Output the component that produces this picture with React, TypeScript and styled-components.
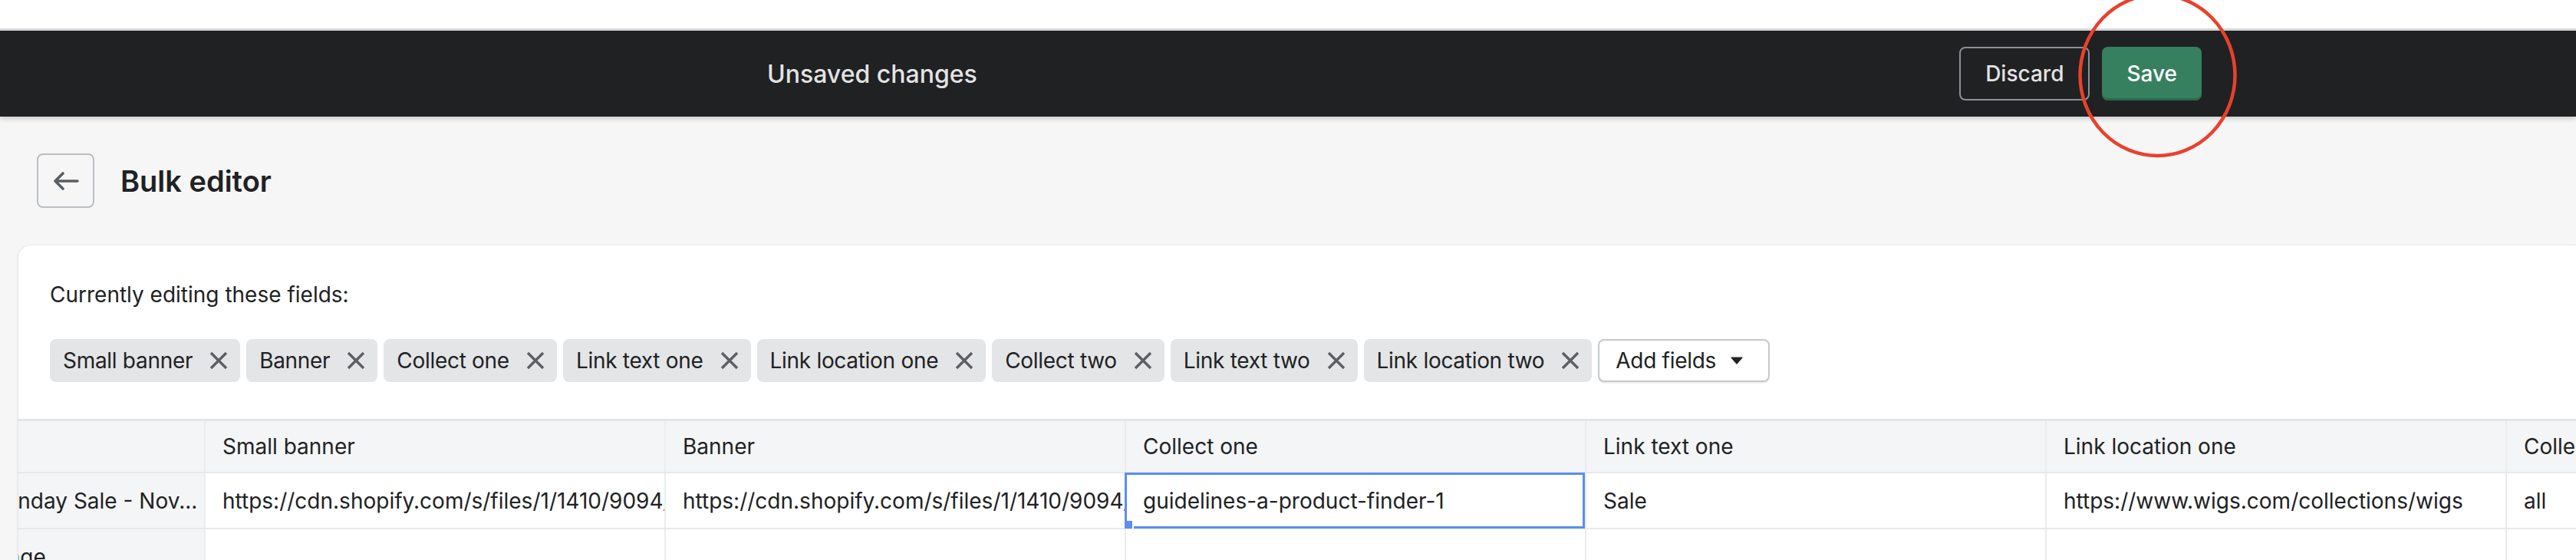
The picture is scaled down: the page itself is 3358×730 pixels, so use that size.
import React from "react";
import styled, { createGlobalStyle } from "styled-components";

const GlobalStyle = createGlobalStyle`
  html, body {
    margin: 0;
    padding: 0;
    overflow: hidden;
  }
  body {
    background: #f6f6f7;
    font-family: Inter, "Noto Sans", "Liberation Sans", sans-serif;
    color: #202223;
  }
  * {
    box-sizing: border-box;
  }
`;

const Page = styled.div`
  position: relative;
  width: 3358px;
  height: 730px;
  overflow: hidden;
`;

const BrowserStrip = styled.div`
  height: 40px;
  background: #ffffff;
  border-bottom: 3px solid #d9dadc;
`;

const SaveBar = styled.header`
  position: relative;
  z-index: 1;
  height: 112px;
  display: flex;
  align-items: center;
  justify-content: space-between;
  padding: 0 488px 0 1000px;
  background: #202123;
  box-shadow: 0 3px 6px rgba(0, 0, 0, 0.18);
`;

const SaveBarTitle = styled.h2`
  margin: 0;
  font-size: 32px;
  font-weight: 500;
  color: #e3e3e3;
`;

const SaveBarActions = styled.div`
  display: flex;
  gap: 16px;
`;

const BarButton = styled.button<{ $primary?: boolean }>`
  height: 70px;
  padding: 0 32px;
  border-radius: 8px;
  font-family: inherit;
  font-size: 28px;
  font-weight: 500;
  cursor: pointer;
  border: ${(p) => (p.$primary ? "none" : "2px solid #8c9196")};
  background: ${(p) => (p.$primary ? "#36805f" : "transparent")};
  color: ${(p) => (p.$primary ? "#ffffff" : "#e3e3e3")};
  box-shadow: ${(p) => (p.$primary ? "inset 0 -3px 0 #2a6a4e" : "none")};
`;

const Annotation = styled.svg`
  position: absolute;
  left: 2708px;
  top: -9px;
  z-index: 2;
  pointer-events: none;
`;

const PageHeader = styled.div`
  display: flex;
  align-items: center;
  gap: 34px;
  padding: 48px 0 0 48px;
`;

const BackButton = styled.button`
  width: 75px;
  height: 71px;
  display: flex;
  align-items: center;
  justify-content: center;
  padding: 0;
  background: transparent;
  border: 2px solid #babfc3;
  border-radius: 8px;
  cursor: pointer;
`;

const Title = styled.h1`
  margin: 0;
  font-size: 38px;
  font-weight: 600;
  color: #202223;
`;

const Card = styled.section`
  margin: 49px 0 0 24px;
  background: #ffffff;
  border-radius: 16px 0 0 0;
  box-shadow: 0 0 0 1px rgba(63, 63, 68, 0.05), 0 2px 4px rgba(63, 63, 68, 0.12);
  overflow: hidden;
`;

const FieldsSection = styled.div`
  padding: 44px 0 48px 41px;
`;

const FieldsLabel = styled.p`
  margin: 0;
  font-size: 28px;
  line-height: 40px;
`;

const ChipRow = styled.div`
  display: flex;
  align-items: center;
  gap: 8px;
  margin-top: 38px;
`;

const Chip = styled.span`
  height: 56px;
  display: inline-flex;
  align-items: center;
  gap: 22px;
  padding: 0 16px 0 17px;
  border-radius: 8px;
  background: #e4e5e7;
  font-size: 28px;
  letter-spacing: -0.3px;
  white-space: nowrap;
`;

const AddFieldsButton = styled.button`
  height: 56px;
  display: inline-flex;
  align-items: center;
  gap: 19px;
  padding: 0 33px 0 21px;
  background: #ffffff;
  border: 2px solid #c4c8cc;
  border-radius: 8px;
  box-shadow: 0 2px 0 rgba(0, 0, 0, 0.06);
  font-family: inherit;
  font-size: 28px;
  letter-spacing: -0.3px;
  color: #202223;
  cursor: pointer;
`;

const Table = styled.div`
  border-top: 3px solid #e4e5e7;
`;

const Row = styled.div<{ $header?: boolean }>`
  display: grid;
  grid-template-columns: 244px repeat(6, 600px);
  height: ${(p) => (p.$header ? "68px" : "73px")};
  border-bottom: 2px solid #e8e9eb;
  background: ${(p) => (p.$header ? "#f4f5f6" : "#ffffff")};
`;

const Cell = styled.div<{ $frozen?: boolean; $selected?: boolean }>`
  position: relative;
  display: flex;
  align-items: center;
  padding-left: ${(p) => (p.$frozen ? "0" : "22px")};
  border-right: 2px solid #ebeced;
  background: ${(p) => (p.$frozen ? "#f4f5f6" : "transparent")};
  font-size: 28px;
  white-space: nowrap;
  overflow: ${(p) => (p.$selected ? "visible" : "hidden")};

  ${(p) =>
    p.$selected &&
    `
    &::after {
      content: "";
      position: absolute;
      top: -1px;
      right: 0;
      bottom: -1px;
      left: -2px;
      border: 3px solid #5b8ef0;
      pointer-events: none;
    }
  `}
`;

const FrozenText = styled.span`
  margin-left: -131px;
`;

const FillHandle = styled.span`
  position: absolute;
  left: -2px;
  bottom: -1px;
  width: 10px;
  height: 10px;
  background: #5b8ef0;
  box-shadow: 2px 0 0 #ffffff;
  z-index: 1;
`;

const fields = [
  "Small banner",
  "Banner",
  "Collect one",
  "Link text one",
  "Link location one",
  "Collect two",
  "Link text two",
  "Link location two",
];

const columns = [
  "Small banner",
  "Banner",
  "Collect one",
  "Link text one",
  "Link location one",
  "Collect two",
];

const firstRow = [
  "https://cdn.shopify.com/s/files/1/1410/9094/files/small-banner.jpg",
  "https://cdn.shopify.com/s/files/1/1410/9094/files/banner.jpg",
  "guidelines-a-product-finder-1",
  "Sale",
  "https://www.wigs.com/collections/wigs",
  "all",
];

const CloseIcon = () => (
  <svg width="24" height="24" viewBox="0 0 24 24">
    <path d="M2 2L22 22M22 2L2 22" stroke="#5c5f62" strokeWidth="3.4" fill="none" />
  </svg>
);

const Caret = () => (
  <svg width="16" height="10" viewBox="0 0 16 10">
    <path d="M1 1.2h14L8 9z" fill="#202223" stroke="#202223" strokeWidth="1.2" strokeLinejoin="round" />
  </svg>
);

const ArrowLeft = () => (
  <svg width="34" height="24" viewBox="0 0 34 24">
    <path
      d="M32 12H3M13 2L3 12l10 10"
      stroke="#5c5f62"
      strokeWidth="3.6"
      strokeLinecap="round"
      strokeLinejoin="round"
      fill="none"
    />
  </svg>
);

const App: React.FC = () => {
  return (
    <Page>
      <GlobalStyle />
      <BrowserStrip />
      <SaveBar>
        <SaveBarTitle>Unsaved changes</SaveBarTitle>
        <SaveBarActions>
          <BarButton>Discard</BarButton>
          <BarButton $primary>Save</BarButton>
        </SaveBarActions>
      </SaveBar>
      <Annotation width="210" height="220" viewBox="0 0 210 220">
        <ellipse cx="104.5" cy="107" rx="101" ry="105" stroke="#e8412c" strokeWidth="4.5" fill="none" />
      </Annotation>

      <PageHeader>
        <BackButton aria-label="Back">
          <ArrowLeft />
        </BackButton>
        <Title>Bulk editor</Title>
      </PageHeader>

      <Card>
        <FieldsSection>
          <FieldsLabel>Currently editing these fields:</FieldsLabel>
          <ChipRow>
            {fields.map((f) => (
              <Chip key={f}>
                {f}
                <CloseIcon />
              </Chip>
            ))}
            <AddFieldsButton>
              Add fields
              <Caret />
            </AddFieldsButton>
          </ChipRow>
        </FieldsSection>

        <Table>
          <Row $header>
            <Cell $frozen />
            {columns.map((c) => (
              <Cell key={c}>{c}</Cell>
            ))}
          </Row>
          <Row>
            <Cell $frozen>
              <FrozenText>Cyber Monday Sale - Nov...</FrozenText>
            </Cell>
            {firstRow.map((v, i) => (
              <Cell key={i} $selected={i === 2}>
                {v}
                {i === 2 && <FillHandle />}
              </Cell>
            ))}
          </Row>
          <Row>
            <Cell $frozen>
              <FrozenText>Home image</FrozenText>
            </Cell>
            {columns.map((c) => (
              <Cell key={c} />
            ))}
          </Row>
        </Table>
      </Card>
    </Page>
  );
};

export default App;
